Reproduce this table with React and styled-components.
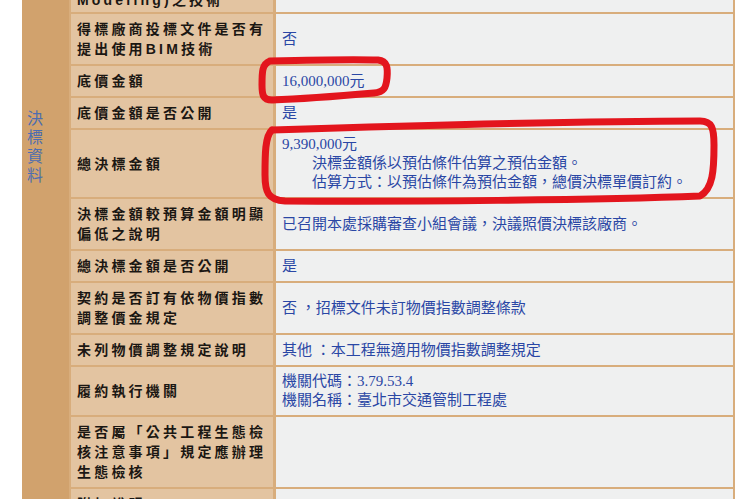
import React from "react";
import styled, { createGlobalStyle } from "styled-components";

const GlobalStyle = createGlobalStyle`
  html, body {
    margin: 0;
    padding: 0;
    background: #ffffff;
  }
  body {
    font-family: "Noto Sans CJK TC", sans-serif;
  }
`;

const Page = styled.div`
  position: relative;
  width: 740px;
  height: 499px;
  overflow: hidden;
  background: #ffffff;
`;

const Table = styled.div`
  box-sizing: border-box;
  width: 713px;
  margin: -38px 0 0 22px;
  padding-right: 2px;
  display: flex;
  gap: 2px;
  background: #d8ad7c;
`;

const Section = styled.div`
  box-sizing: border-box;
  width: 47px;
  flex-shrink: 0;
  padding: 146px 0 0 5px;
  background: #d1a26d;
  color: #4d6db0;
  font-family: "Noto Sans CJK TC", sans-serif;
  font-size: 16px;
  line-height: 19px;
  word-break: break-all;
`;

const SectionText = styled.div`
  width: 17px;
`;

const Rows = styled.div`
  display: flex;
  flex-direction: column;
  gap: 2px;
  width: 662px;
`;

const Row = styled.div`
  display: grid;
  grid-template-columns: 202px 457px;
  column-gap: 3px;
`;

const Label = styled.div`
  box-sizing: border-box;
  display: flex;
  align-items: center;
  padding: ${(p) => (p.$clipped ? "6px 4px 0 6px" : "5px 4px 5px 6px")};
  min-height: ${(p) => (p.$clipped ? "50px" : "0")};
  background: #e3c4a1;
  color: #1b1713;
  font-family: "Liberation Sans", "Noto Sans CJK TC", sans-serif;
  font-weight: 700;
  font-size: 14px;
  line-height: 20px;
  letter-spacing: 3.2px;
  white-space: nowrap;
`;

const Value = styled.div`
  box-sizing: border-box;
  display: flex;
  flex-direction: column;
  justify-content: center;
  padding: 5px 6px;
  background: #eff0f0;
  color: #2a47a5;
  font-family: "Liberation Serif", "Noto Sans CJK TC", serif;
  font-size: 15px;
  line-height: 19px;
  white-space: nowrap;
`;

const Indent = styled.div`
  padding-left: 30px;
`;

const Marks = styled.svg`
  position: absolute;
  top: 0;
  left: 0;
  pointer-events: none;
`;

const RedMarks = () => (
  <Marks width="740" height="499" viewBox="0 0 740 499">
    <g fill="none" stroke="#e3151d" strokeWidth="7" strokeLinecap="round" strokeLinejoin="round">
      <path d="M270 61 C310 60 350 59 378 60 C387 61 388 67 387 78 C386 88 384 92 374 93 C340 96 300 99 272 100 C263 100 262 95 262 85 C262 72 262 64 270 61" />
      <path d="M272 130 C400 126 600 121 700 121 C712 121 714 128 714 145 C714 170 713 189 700 196 C600 200 400 202 285 201 C268 200 265 192 265 175 C265 155 265 136 272 130" />
    </g>
  </Marks>
);

export default function App() {
  return (
    <Page>
      <GlobalStyle />
      <Table>
        <Section>
          <SectionText>決標資料</SectionText>
        </Section>
        <Rows>
          <Row>
            <Label $clipped>
              (Building Information
              <br />
              Modeling)之技術
            </Label>
            <Value />
          </Row>
          <Row>
            <Label>
              得標廠商投標文件是否有
              <br />
              提出使用BIM技術
            </Label>
            <Value>否</Value>
          </Row>
          <Row>
            <Label>底價金額</Label>
            <Value>16,000,000元</Value>
          </Row>
          <Row>
            <Label>底價金額是否公開</Label>
            <Value>是</Value>
          </Row>
          <Row>
            <Label>總決標金額</Label>
            <Value>
              <div>9,390,000元</div>
              <Indent>決標金額係以預估條件估算之預估金額。</Indent>
              <Indent>估算方式：以預估條件為預估金額，總價決標單價訂約。</Indent>
            </Value>
          </Row>
          <Row>
            <Label>
              決標金額較預算金額明顯
              <br />
              偏低之說明
            </Label>
            <Value>已召開本處採購審查小組會議，決議照價決標該廠商。</Value>
          </Row>
          <Row>
            <Label>總決標金額是否公開</Label>
            <Value>是</Value>
          </Row>
          <Row>
            <Label>
              契約是否訂有依物價指數
              <br />
              調整價金規定
            </Label>
            <Value>否 ，招標文件未訂物價指數調整條款</Value>
          </Row>
          <Row>
            <Label>未列物價調整規定說明</Label>
            <Value>其他 ：本工程無適用物價指數調整規定</Value>
          </Row>
          <Row>
            <Label>履約執行機關</Label>
            <Value>
              <div>機關代碼：3.79.53.4</div>
              <div>機關名稱：臺北市交通管制工程處</div>
            </Value>
          </Row>
          <Row>
            <Label>
              是否屬「公共工程生態檢
              <br />
              核注意事項」規定應辦理
              <br />
              生態檢核
            </Label>
            <Value />
          </Row>
          <Row>
            <Label>附加說明</Label>
            <Value />
          </Row>
        </Rows>
      </Table>
      <RedMarks />
    </Page>
  );
}
